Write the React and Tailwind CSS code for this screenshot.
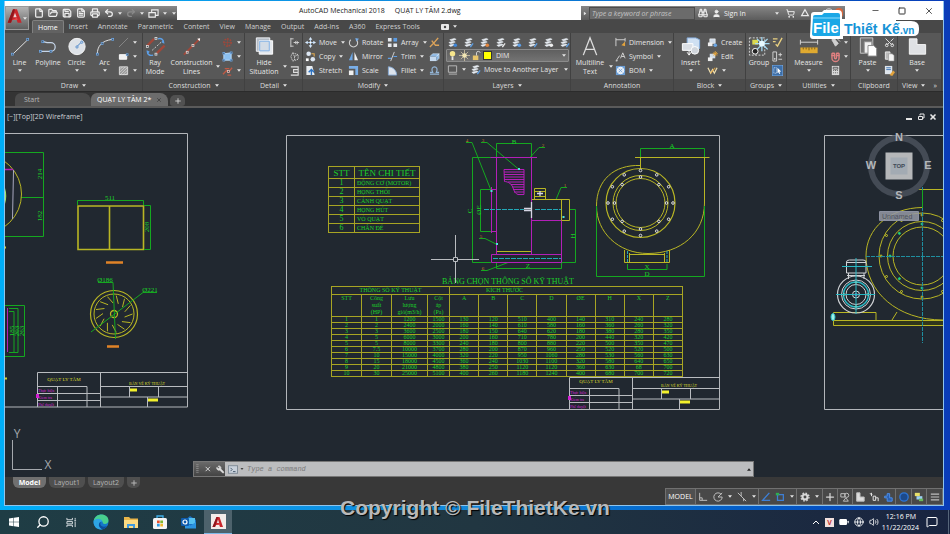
import clsx from "clsx"
import {
  BatteryMedium,
  Binoculars,
  File,
  FileText,
  FolderOpen,
  Globe,
  CircleHelp,
  Magnet,
  MessageSquare,
  Minus,
  Plus,
  Printer,
  Save,
  Scissors,
  Search,
  Settings,
  ShoppingCart,
  Square,
  Undo2,
  Redo2,
  User,
  Volume2,
  Wrench,
  X,
} from "lucide-react"

const menuTabs = ["Insert", "Annotate", "Parametric", "Content", "View", "Manage", "Output", "Add-ins", "A360", "Express Tools"]

const parts = ["ĐỘNG CƠ (MOTOR)", "HỌNG THỔI", "CÁNH QUẠT", "HỌNG HÚT", "VỎ QUẠT", "CHÂN ĐẾ"]

const specHeads = ["A", "B", "C", "D", "ØE", "H", "X", "Z"]

const specRows = [
  [1, 1, 1200, 1500, 130, 120, 510, 400, 140, 310, 240, 280],
  [2, 2, 2400, 2000, 160, 140, 610, 580, 160, 360, 260, 320],
  [3, 3, 3600, 2500, 180, 150, 640, 620, 180, 380, 280, 350],
  [4, 5, 6000, 3000, 200, 160, 710, 780, 200, 440, 320, 420],
  [5, 5, 8000, 3300, 240, 180, 800, 880, 220, 500, 350, 470],
  [6, "7.5", 10000, 3700, 280, 200, 870, 960, 250, 520, 520, 500],
  [7, 10, 15000, 4000, 320, 220, 950, 1060, 280, 530, 560, 630],
  [8, 15, 18000, 4500, 360, 240, 1030, 1100, 320, 580, 640, 650],
  [9, 20, 21000, 4800, 380, 250, 1120, 1120, 360, 630, 68, 700],
  [10, 30, 25000, 5100, 400, 260, 1180, 1240, 400, 680, 700, 720],
]

const Caret = ({ className }) => (
  <svg viewBox="0 0 6 4" className={clsx("h-[3px] w-[4px] shrink-0", className)}>
    <path d="M0 0h6L3 4z" fill="#e4e4e4" />
  </svg>
)

const Big = ({ children }) => (
  <svg viewBox="0 0 24 24" className="h-[23px] w-6 shrink-0" fill="none">
    {children}
  </svg>
)

const Small = ({ children }) => (
  <svg viewBox="0 0 12 12" className="h-[11px] w-[11px] shrink-0" fill="none">
    {children}
  </svg>
)

const Node = ({ x, y, c = "#6fa8e6" }) => <rect x={x - 1} y={y - 1} width="2" height="2" fill="#3a4653" stroke={c} strokeWidth="0.8" />

/* large ribbon icons */
const LineIcon = () => (
  <Big>
    <path d="M4.500 20L20 5" stroke="#e6e6e6" />
    <Node x={4} y={20} />
    <Node x={20} y={4.5} />
  </Big>
)
const PolylineIcon = () => (
  <Big>
    <path d="M4 17h11a4.500 4.500 0 0 0 0-9h-4L7 7" stroke="#c5d5e8" strokeWidth="1.300" />
    <Node x={4} y={17} />
    <Node x={15} y={17} />
    <Node x={6.5} y={7} />
  </Big>
)
const CircleIcon = () => (
  <Big>
    <circle cx="12" cy="12" r="8.500" fill="#dde2e8" stroke="#f4f4f4" />
    <path d="M12 12l4-4" stroke="#3f7fc8" />
    <circle cx="12" cy="12.500" r="1.200" fill="#dde2e8" stroke="#3f7fc8" strokeWidth="0.800" />
    <circle cx="17" cy="7.500" r="1.200" fill="#dde2e8" stroke="#3f7fc8" strokeWidth="0.800" />
  </Big>
)
const ArcIcon = () => (
  <Big>
    <path d="M4 20C4 12 8 6 20 4.500" stroke="#e6e6e6" />
    <Node x={4} y={20} />
    <Node x={9} y={9} />
    <Node x={20} y={4.5} />
  </Big>
)
const RayIcon = () => (
  <Big>
    <path d="M4 11l7-7M14 19l8-8" stroke="#a0483a" strokeWidth="2.500" />
    <path d="M9 16L19 7" stroke="#cfcfcf" strokeDasharray="2 1.500" />
    <path d="M15 4c4-1 6 1 6 4l-2-1M10 21c-4 1-6-1-6-4l2 1" stroke="#5d9fe6" strokeWidth="1.500" />
    <Node x={4} y={12} c="#e6e6e6" />
    <Node x={13} y={3.5} c="#e6e6e6" />
    <Node x={13} y={20} c="#e6e6e6" />
  </Big>
)
const ConstructionIcon = () => (
  <Big>
    <path d="M3.500 20.500L20 4" stroke="#a0483a" strokeWidth="2" />
    <Node x={7} y={18} c="#efd9d4" />
    <Node x={13} y={11} c="#efd9d4" />
    <path d="M20.500 3.500l-3 .5 2.500 2.500z" fill="#fff" />
  </Big>
)
const HideIcon = () => (
  <Big>
    <path d="M4 3h14v14H4z" fill="#b4bcc6" stroke="#f2f5f9" />
    <path d="M7 6h14v14H7z" fill="#e4e8ed" stroke="#fff" />
    <path d="M7.500 6.500h10v10h-10z" stroke="#7fb0e6" fill="#d3dce6" />
  </Big>
)
const MTextIcon = () => (
  <Big>
    <path d="M5 21L12 3l7 18M7.500 15h9" stroke="#dcdcdc" strokeWidth="1.400" />
  </Big>
)
const InsertIcon = () => (
  <Big>
    <path d="M8 3h9l4 2v9l-4 2H8z" fill="#cfe0f2" stroke="#86aede" />
    <path d="M3 9h11v7H3z" fill="#dadfe5" stroke="#fff" />
    <circle cx="16" cy="16" r="4" fill="#d0d5db" stroke="#fff" />
    <path d="M10 16v4M8 18l2 3 2-3" stroke="#fff" />
  </Big>
)
const GroupIcon = () => (
  <Big>
    <path d="M2 3h16v18H2z" stroke="#d8d8d8" strokeDasharray="2 1.500" />
    <path d="M5 5h6v5H5z" fill="#d9d94f" />
    <circle cx="8" cy="17" r="3" fill="#222" stroke="#fff" />
    <path d="M15 2v15M8 9h15M10 4l11 11M21 4L10 15" stroke="#a5dcf7" strokeWidth="1.300" />
    <circle cx="15" cy="9" r="3" fill="#e9faff" />
  </Big>
)
const MeasureIcon = () => (
  <Big>
    <path d="M3 5v5M21 5v5M3 7.500h18" stroke="#d8d8d8" />
    <path d="M3 13h18v6H3z" fill="#e0aa30" />
    <path d="M6 13v2M9 13v2M12 13v3M15 13v2M18 13v2" stroke="#5e4610" strokeWidth="0.800" />
  </Big>
)
const PasteIcon = () => (
  <Big>
    <path d="M4 3h13v16H4z" fill="#6e6e6e" stroke="#c8c8c8" />
    <path d="M8 7h8v12H8z" fill="#f1f1f1" stroke="#888" />
    <path d="M12 11h6l3 3v8h-9z" fill="#fff" stroke="#888" />
  </Big>
)
const BaseIcon = () => (
  <Big>
    <path d="M4 4h8v6h9v10H4z" fill="#dfe1e4" stroke="#f6f6f6" />
  </Big>
)

/* small ribbon icons, keyed by command */
const smallIcons = {
  ray: <path d="M1 11L11 1" stroke="#8b8b8b" />,
  rect: (
    <>
      <path d="M1.500 4h8v5h-8z" fill="#f0f0f0" stroke="#fff" />
      <Node x={10} y={4} />
    </>
  ),
  hatch: (
    <>
      <path d="M1.500 2h9v8.500h-9z" fill="#9a9a9a" stroke="#ddd" />
      <path d="M2 5l3-3M2 8l6-6M2 11l8-8M5 11l5-5M8 11l2-2" stroke="#eee" strokeWidth="0.600" />
    </>
  ),
  center: (
    <>
      <circle cx="6" cy="6" r="4" stroke="#a0483a" strokeWidth="1.500" strokeDasharray="2 1" />
      <path d="M6 1v10M1 6h10" stroke="#a0483a" strokeWidth="0.700" />
    </>
  ),
  area: (
    <>
      <path d="M2 3l8-1v8H2z" fill="#8cc0f0" stroke="#b9dbfa" />
      <Node x={2} y={2.5} />
      <Node x={10} y={2} />
      <Node x={2} y={10} />
      <Node x={10} y={10} />
    </>
  ),
  project: (
    <>
      <path d="M1 10l4-4 2 2 4-5M3 4h5M6 11h4" stroke="#c05a44" strokeWidth="1.500" />
      <Node x={7} y={7} c="#e8c8c0" />
    </>
  ),
  detail: <path d="M2 1v10M2 2h3M2 10h3M5 6h6M8 4.500L6 6l2 1.500M9 4.500V8" stroke="#d4d4d4" />,
  hidden: <path d="M4 2l6 2v5l-6 2-2-5zM4 2l2 4M6 6l4-2M6 6v4" stroke="#d4d4d4" strokeDasharray="1.500 0.800" />,
  section: <path d="M2 2h8v3H5v3h5v3H2M8 5h2v3" stroke="#dedede" strokeWidth="1.200" />,
  move: (
    <>
      <path d="M6 1v10M1 6h10" stroke="#a9cdf2" />
      <path d="M6 0l2 3H4zM6 12l2-3H4zM0 6l3-2v4zM12 6L9 4v4z" fill="#d7e9fb" />
      <path d="M5 5h2v2H5z" fill="#fff" />
    </>
  ),
  rotate: (
    <>
      <path d="M3 3a4.500 4.500 0 1 0 6 0" stroke="#d0d0d0" strokeWidth="1.200" />
      <path d="M8 1l4 1-3 3z" fill="#78aee8" />
    </>
  ),
  array: (
    <>
      <path d="M1 1h4v4H1zM1 7h4v4H1zM7 7h4v4H7z" fill="#e6e9ed" />
      <path d="M7 1h4v4H7z" fill="#5b9be2" />
    </>
  ),
  erase: <path d="M1 11c3-3 6-6 9-10M3 4l4 5h4" stroke="#dca35a" strokeWidth="1.500" />,
  copy: (
    <>
      <circle cx="4" cy="3" r="2.500" fill="#dce6f2" />
      <circle cx="8.500" cy="9" r="2.500" fill="#dce6f2" />
      <path d="M1 8h3v3H1z" fill="#fff" />
      <path d="M7 3h3v3" stroke="#e0aa50" strokeWidth="1.200" />
    </>
  ),
  mirror: (
    <>
      <path d="M5 1v9H1z" fill="#6aa5e4" />
      <path d="M7 1v9h4z" fill="#f0f0f0" />
    </>
  ),
  trim: (
    <>
      <path d="M1 8l4 0M7 6h4" stroke="#5f9fe6" strokeWidth="1.300" />
      <path d="M4 11L8 1" stroke="#d8d8d8" />
    </>
  ),
  explode: (
    <>
      <path d="M1 6h7v5H1z" fill="#c5d9ee" />
      <path d="M1 6l3-3h7L8 6M8 6l3-3v5l-3 3" fill="#8db8e4" stroke="#dceafa" strokeWidth="0.600" />
    </>
  ),
  stretch: (
    <>
      <path d="M1.500 1H8l2.500 10h-9z" fill="#e8ecf0" />
      <path d="M4 8l3-3 3 3M7 5v6" stroke="#2c72c2" strokeWidth="1.500" />
    </>
  ),
  scale: (
    <>
      <path d="M1 1h10v10H8V4H1z" fill="#79aee8" />
      <path d="M1 6h5v5H1z" fill="#f0f0f0" />
    </>
  ),
  fillet: <path d="M1.500 11V2c5 0 9 4 9 9z" fill="#dce3ec" stroke="#84a8d4" />,
  offset: <path d="M1 10h10M1 8h3C0 0 12 0 8 8h3" stroke="#94b6d8" strokeWidth="1.300" />,
  symbol: <path d="M1 11l4-6M1 11l2-.5M6 8l2.500-6L11 8M7 6h3" stroke="#d6d6d6" />,
  dimension: (
    <>
      <path d="M1 1v9M11 1v4M1 3h10" stroke="#d6d6d6" />
      <path d="M7 9l4-4v5z" fill="#e2a33d" />
    </>
  ),
  bom: (
    <>
      <path d="M1 1h10v10H1z" fill="#6d9fd6" />
      <circle cx="6" cy="6" r="3.500" fill="#dfeaf6" stroke="#fff" />
      <path d="M4 4l4 4M8 4L4 8" stroke="#6d9fd6" strokeWidth="0.800" />
    </>
  ),
  create: (
    <>
      <path d="M3 2h6v5H3z" fill="#cfdbe8" stroke="#fff" strokeWidth="0.600" />
      <path d="M1 6h5v4H1z" fill="#eee" />
      <circle cx="9" cy="9" r="2" fill="#6aa5e4" />
    </>
  ),
  edit: (
    <>
      <path d="M3 3h6v5H3z" fill="#cfdbe8" />
      <path d="M1 7h5v4H1z" fill="#eee" />
      <path d="M9 0v6M6 3h6M7 1l4 4M11 1L7 5" stroke="#e8a63a" strokeWidth="0.900" />
    </>
  ),
  attrs: (
    <>
      <path d="M1 3l3 6 2-4 2 4 3-6" stroke="#f0e0b0" strokeWidth="1.300" />
      <path d="M4 9l5-6" stroke="#e2a33d" strokeWidth="1.200" />
    </>
  ),
  ungroup: <path d="M1 2h5M1 5h3M4 8l2 2 5-9" stroke="#e8cf80" strokeWidth="1.500" />,
  groupedit: (
    <>
      <path d="M1 1h4v10H1zM7 4h4M9 2v4M7 9h4" stroke="#d8d8d8" />
      <circle cx="3" cy="8.500" r="1" fill="#d8d8d8" />
    </>
  ),
  groupsel: (
    <>
      <path d="M0 0h12v12H0z" fill="#3c6ea8" stroke="#7fb0e8" />
      <path d="M2 3h3v6H2z" stroke="#dce8f6" strokeDasharray="1 1" />
      <path d="M6 3l4 4-2 .3 1 2-1 .5-1-2L6 9z" fill="#fff" />
    </>
  ),
  select: <path d="M2 3l3-1 4 5-3 3zM8 2l3 3" fill="#d0d0d0" stroke="#d0d0d0" />,
  calc: (
    <>
      <path d="M2 1h8v10H2z" fill="#d8d8d8" />
      <path d="M3.500 2.500h5v2h-5zM3.500 6h1M5.500 6h1M7.500 6h1M3.500 8.500h1M5.500 8.500h1M7.500 8.500h1" stroke="#555" />
    </>
  ),
  copyclip: (
    <>
      <path d="M1.500 1h5v8h-5z" fill="#bbb" stroke="#eee" />
      <path d="M5 3h4l2 2v6H5z" fill="#f4f4f4" stroke="#888" strokeWidth="0.600" />
    </>
  ),
  workspace: <path d="M1 5h7v5H1zM4 5V2h7v6H8" fill="#6b6b6b" stroke="#eee" strokeWidth="1.200" />,
  match: (
    <>
      <path d="M1 1h8v9H1z" fill="#dfe5ec" />
      <path d="M2.500 3h5M2.500 5h5" stroke="#3b72b4" />
      <path d="M6 11l4-5 2 2-3 4z" fill="#e2a33d" />
    </>
  ),
  frame: <path d="M1.500 2h9v7h-9zM2 11h9" stroke="#bdbdbd" />,
}

const SmallIcon = ({ name }) => <Small>{smallIcons[name]}</Small>

const LayerIcon = ({ tone = "#5d9fe6", mark }) => (
  <Small>
    <path d="M3 3l5-1.500 2 1L5 4.300zM2 6l5-1.500 2 1L4 7.300zM2 9l5-1.500 2 1-5 1.800z" fill="#e8edf3" stroke="#e8edf3" strokeWidth="0.600" />
    {mark === "dot" ? <circle cx="9" cy="9" r="2" fill={tone} /> : <path d="M8 11l3-4" stroke={tone} strokeWidth="1.500" />}
  </Small>
)

const Panel = ({ title, width, caret = true, more, children }) => (
  <section className={clsx("flex shrink-0 flex-col border-r border-[#414141]", width)}>
    <div className="flex h-[46px] items-start bg-[#585858] pt-[2px]">{children}</div>
    <h2 className="flex h-3 items-center justify-center gap-1 bg-[#4a4a4a] text-[#dcdcdc]">
      {title}
      {caret && <Caret />}
      {more && <span className="ml-1">»</span>}
    </h2>
  </section>
)

const BigButton = ({ icon, label, width, caret = true }) => (
  <button type="button" className={clsx("flex shrink-0 flex-col items-center leading-[9px]", width)}>
    {icon}
    {label.map((line) => (
      <span key={line} className="whitespace-nowrap">
        {line}
      </span>
    ))}
    {caret && label.length === 1 && <Caret className="mt-[2px]" />}
  </button>
)

const SideCaret = () => (
  <span className="flex h-[42px] w-[6px] shrink-0 items-end pb-[9px]">
    <Caret />
  </span>
)

const Column = ({ width, items }) => (
  <div className={clsx("flex shrink-0 flex-col", width)}>
    {items.map(([icon, label, caret]) => (
      <button key={icon} type="button" aria-label={label || icon} className="flex h-[14px] items-center gap-[3px] whitespace-nowrap">
        <SmallIcon name={icon} />
        {label}
        {caret && <Caret className="ml-[1px]" />}
      </button>
    ))}
  </div>
)

const AcadLogo = ({ className }) => (
  <svg viewBox="0 0 24 24" className={className}>
    <path d="M9 2h6l7 20h-6l-1.500-4H8l-2 4H1z" fill="#c9262c" />
    <path d="M9 2h3L6 22H1z" fill="#8f171d" />
    <path d="M12 7l2.500 7H9.500z" fill="#e9d6d6" />
    <path d="M8 18l7-3.500 1 3.500z" fill="#e5474b" />
  </svg>
)

const TitleBar = () => (
  <header className="flex h-[19px] items-stretch bg-white">
    <div className="mt-[5px] ml-6 flex w-[148px] items-center gap-[4px] bg-linear-to-b from-[#8a8a8a] to-[#4e4e4e] pl-[5px] text-[#ededed]">
      {[File, FolderOpen, Save, FileText, Printer].map((Icon, i) => (
        <button key={i} type="button" aria-label={["New", "Open", "Save", "Save As", "Plot"][i]}>
          <Icon size={10} strokeWidth={3} />
        </button>
      ))}
      <button type="button" aria-label="Undo" className="flex items-center gap-[4px]">
        <Undo2 size={10} strokeWidth={3} />
        <Caret />
      </button>
      <button type="button" aria-label="Redo" className="flex items-center gap-[4px] text-[#8b8b8b]">
        <Redo2 size={10} strokeWidth={3} />
        <Caret />
      </button>
      <button type="button" aria-label="Workspace" className="flex items-center gap-[4px]">
        <SmallIcon name="workspace" />
        <Caret />
      </button>
      <Caret className="ml-px" />
    </div>
    <h1 className="flex flex-1 items-center gap-[10px] pl-[122px] text-[7px] whitespace-pre text-[#222]">
      <span>AutoCAD Mechanical 2018</span>
      <span>QUẠT LY TÂM 2.dwg</span>
    </h1>
    <div className="mt-[5px] flex w-[264px] items-center bg-linear-to-b from-[#868686] to-[#5c5c5c] text-[#efefef]">
      <span className="flex w-[8px] justify-center">
        <Caret className="-rotate-90" />
      </span>
      <input
        type="text"
        aria-label="Search"
        placeholder="Type a keyword or phrase"
        className="h-[13px] w-[106px] border border-[#4c4c4c] bg-[#6b6b6b] px-[2px] italic outline-none placeholder:text-[#c4c4c4]"
      />
      <button type="button" aria-label="Find" className="ml-[3px]">
        <Binoculars size={10} strokeWidth={2.5} />
      </button>
      <button type="button" className="ml-[4px] flex items-center gap-[3px]">
        <User size={9} fill="currentColor" />
        Sign In
      </button>
      <Caret className="ml-[29px]" />
      <button type="button" aria-label="Store" className="ml-[7px]">
        <ShoppingCart size={9} strokeWidth={2.5} />
      </button>
      <button type="button" aria-label="A360" className="ml-[5px]">
        <svg viewBox="0 0 12 12" className="h-[10px] w-[10px]" fill="none">
          <path d="M6 2L2 9h8z" stroke="#e8e8e8" strokeWidth="1.500" />
        </svg>
      </button>
      <button type="button" aria-label="Help" className="ml-[14px]">
        <CircleHelp size={10} />
      </button>
      <span className="ml-px h-[10px] w-[8px] rounded-full bg-[#d9663c]" />
    </div>
    <div className="flex w-[98px] items-center justify-end gap-[18px] pr-[9px] text-[#333]">
      <button type="button" aria-label="Minimize">
        <Minus size={9} strokeWidth={2} />
      </button>
      <button type="button" aria-label="Maximize">
        <Square size={8} strokeWidth={3} />
      </button>
      <button type="button" aria-label="Close">
        <X size={10} strokeWidth={2} />
      </button>
    </div>
  </header>
)

const MenuTabs = () => (
  <nav className="flex h-[13px] items-center bg-[#484848] pl-[27px] text-[#cfcfcf]">
    <a href="#home" className="flex h-full items-center rounded-t-[2px] border border-b-0 border-[#808080] bg-[#626262] px-[5px] text-white">
      Home
    </a>
    {menuTabs.map((tab) => (
      <a key={tab} href={"#" + tab} className="px-[5px] whitespace-nowrap">
        {tab}
      </a>
    ))}
    <button type="button" aria-label="Ribbon display" className="ml-4 flex items-center gap-1">
      <svg viewBox="0 0 8 6" className="h-[6px] w-[8px]">
        <rect width="8" height="6" rx="1" fill="#e8e8e8" />
        <circle cx="4" cy="3" r="1.200" fill="#444" />
      </svg>
      <Caret />
    </button>
  </nav>
)

const LayersPanel = () => (
  <Panel title="Layers" width="w-[127px]">
    <div className="flex w-full flex-col pl-[2px]">
      <div className="flex h-[14px] items-center gap-[5px] pl-[1px]">
        {["#3f86d8", "#5d9fe6", "#e2853d", "#e8e8e8", "#5d9fe6", "#5d9fe6", "#f0f0f0", "#5d9fe6"].map((tone, i) => (
          <button key={i} type="button" aria-label={"Layer tool " + (i + 1)}>
            <LayerIcon tone={tone} mark={i % 2 ? "line" : "dot"} />
          </button>
        ))}
      </div>
      <button
        type="button"
        aria-label="Current layer"
        className="flex h-[13px] w-[123px] items-center gap-[1px] rounded-[1px] border border-[#8b8b8b] bg-linear-to-b from-[#5f5f5f] to-[#737373]"
      >
        <Small>
          <circle cx="6" cy="4" r="3" fill="#f6e58c" />
          <path d="M5 7h2v4H5z" fill="#e6e6e6" />
        </Small>
        <Small>
          <path d="M6 0v12M0 6h12M2 2l8 8M10 2l-8 8" stroke="#d8cba8" strokeWidth="0.800" />
          <circle cx="6" cy="6" r="2.500" fill="#f2e6b4" />
        </Small>
        <Small>
          <path d="M2 6h6v5H2z" fill="#e8c46a" />
          <path d="M6 6V3c0-2 4-2 4 0" stroke="#ddd" />
        </Small>
        <span className="mr-[3px] h-[9px] w-[9px] border border-[#333] bg-[#ffff00]" />
        DIM
        <Caret className="mr-[2px] ml-auto" />
      </button>
      <div className="flex h-[15px] items-center gap-[4px] pl-[1px]">
        <SmallIcon name="frame" />
        <Caret />
        <button type="button" className="flex items-center gap-[3px] whitespace-nowrap">
          <LayerIcon />
          Move to Another Layer
          <Caret className="ml-[3px]" />
        </button>
      </div>
    </div>
  </Panel>
)

const IconColumn = ({ children }) => <div className="flex flex-col">{children}</div>

const Ribbon = () => (
  <div className="flex overflow-hidden border-b border-[#2b2b2b] bg-[#4b4b4b] text-[#e6e6e6]">
    <Panel title="Draw" width="w-[138px]">
      <BigButton icon={<LineIcon />} label={["Line"]} width="w-[29px]" />
      <BigButton icon={<PolylineIcon />} label={["Polyline"]} width="w-[28px]" caret={false} />
      <BigButton icon={<CircleIcon />} label={["Circle"]} width="w-[29px]" />
      <BigButton icon={<ArcIcon />} label={["Arc"]} width="w-[27px]" />
      <Column width="w-[22px]" items={[["ray", "", true], ["rect", "", true], ["hatch", "", true]]} />
    </Panel>
    <Panel title="Construction" width="w-[102px]">
      <BigButton icon={<RayIcon />} label={["Ray", "Mode"]} width="w-[24px]" />
      <BigButton icon={<ConstructionIcon />} label={["Construction", "Lines"]} width="w-[49px]" />
      <SideCaret />
      <Column width="w-[20px]" items={[["center", "", true], ["area", "", true], ["project", "", true]]} />
    </Panel>
    <Panel title="Detail" width="w-[58px]">
      <BigButton icon={<HideIcon />} label={["Hide", "Situation"]} width="w-[38px]" />
      <SideCaret />
      <Column width="w-[12px]" items={[["detail"], ["hidden"], ["section"]]} />
    </Panel>
    <Panel title="Modify" width="w-[141px]">
      <div className="flex pl-[2px]">
        <Column width="w-[43px]" items={[["move", "Move", true], ["copy", "Copy", true], ["stretch", "Stretch"]]} />
        <Column width="w-[39px]" items={[["rotate", "Rotate"], ["mirror", "Mirror"], ["scale", "Scale"]]} />
        <Column width="w-[42px]" items={[["array", "Array", true], ["trim", "Trim", true], ["fillet", "Fillet", true]]} />
        <Column width="w-[12px]" items={[["erase"], ["explode"], ["offset"]]} />
      </div>
    </Panel>
    <LayersPanel />
    <Panel title="Annotation" width="w-[103px]" caret={false}>
      <BigButton icon={<MTextIcon />} label={["Multiline", "Text"]} width="w-[38px]" />
      <SideCaret />
      <Column width="w-[58px]" items={[["dimension", "Dimension", true], ["symbol", "Symbol", true], ["bom", "BOM", true]]} />
    </Panel>
    <Panel title="Block" width="w-[72px]">
      <BigButton icon={<InsertIcon />} label={["Insert"]} width="w-[33px]" />
      <Column width="w-[38px]" items={[["create", "Create"], ["edit", "Edit"], ["attrs", "", true]]} />
    </Panel>
    <Panel title="Groups" width="w-[41px]">
      <BigButton icon={<GroupIcon />} label={["Group"]} width="w-[26px]" caret={false} />
      <Column width="w-[14px]" items={[["ungroup"], ["groupedit"], ["groupsel"]]} />
    </Panel>
    <Panel title="Utilities" width="w-[64px]">
      <BigButton icon={<MeasureIcon />} label={["Measure"]} width="w-[43px]" />
      <IconColumn>
        <button type="button" aria-label="Select" className="flex h-[14px] items-center gap-[3px]">
          <SmallIcon name="select" />
          <Caret />
        </button>
        <button type="button" aria-label="Snap" className="flex h-[14px] items-center gap-[3px] text-[#e08080]">
          <Magnet size={11} strokeWidth={3} className="rotate-135" />
          <Caret />
        </button>
        <button type="button" aria-label="Calculator" className="flex h-[14px] items-center">
          <SmallIcon name="calc" />
        </button>
      </IconColumn>
    </Panel>
    <Panel title="Clipboard" width="w-[47px]" caret={false}>
      <BigButton icon={<PasteIcon />} label={["Paste"]} width="w-[33px]" />
      <IconColumn>
        <button type="button" aria-label="Cut" className="flex h-[14px] items-center">
          <Scissors size={11} className="-rotate-90" />
        </button>
        <button type="button" aria-label="Copy clip" className="flex h-[14px] items-center">
          <SmallIcon name="copyclip" />
        </button>
        <button type="button" aria-label="Match" className="flex h-[14px] items-center">
          <SmallIcon name="match" />
        </button>
      </IconColumn>
    </Panel>
    <Panel title="View" width="w-[44px]" more>
      <BigButton icon={<BaseIcon />} label={["Base"]} width="w-[38px]" />
    </Panel>
  </div>
)

const FileTabs = () => (
  <div className="flex h-4 items-end border-b-2 border-[#5a5a5a] bg-[#343434] pl-[10px]">
    <button type="button" className="flex h-[13px] w-[76px] items-center rounded-tl-[6px] rounded-tr-[8px] bg-[#4c4c4c] pl-[9px] text-[#b9b9b9]">
      Start
    </button>
    <button type="button" className="flex h-[13px] w-[77px] items-center gap-[5px] rounded-tl-[6px] rounded-tr-[8px] bg-[#6c6c6c] pl-[6px] whitespace-nowrap text-white">
      QUẠT LY TÂM 2*
      <X size={6} className="text-[#3b3b3b]" strokeWidth={3} />
    </button>
    <button type="button" aria-label="New drawing" className="ml-[2px] flex h-[11px] w-[15px] items-center justify-center rounded-t-[5px] rounded-b-[3px] bg-[#515151] text-[#ddd]">
      <Plus size={8} strokeWidth={2.5} />
    </button>
  </div>
)

const CadText = ({ x, y, size = 7, color = "#1bd028", rotate, children, anchor = "middle" }) => (
  <text x={x} y={y} fontSize={size} fill={color} textAnchor={anchor} transform={rotate ? `rotate(-90 ${x} ${y})` : undefined}>
    {children}
  </text>
)

const polar = (cx, cy, r, deg) => {
  const a = (deg * Math.PI) / 180
  return [cx + r * Math.cos(a), cy + r * Math.sin(a)]
}

const Bolts = ({ cx, cy, r, count, color, size = 1.3, fill = "none" }) =>
  Array.from({ length: count }, (_, i) => {
    const [x, y] = polar(cx, cy, r, (360 / count) * i)
    return <circle key={i} cx={x} cy={y} r={size} stroke={color} fill={fill} />
  })

const TitleBlock = ({ dx, dy, top }) => (
  <g transform={`translate(${dx} ${dy})`}>
    <path
      d={`M37.500 407V${top}H187.500M100.500 ${top}V407M37.500 386.500H87V407M37.500 393.500H100.500M37.500 400.500H100.500M57.500 386.500V407M100.500 386.500H187.500M100.500 397H187.500M129.500 386.500V397M158.500 386.500V397M147.500 397V407`}
      stroke="#b9bcc0"
    />
    <path d="M130 388.500h7v3h-7zM148 398.500h10v3h-10z" fill="#f2f02c" />
    <path d="M36 394h3v4h-3z" fill="#d11fd1" />
    <CadText x={64} y={381} size={5} color="#dcdc2e">QUẠT LY TÂM</CadText>
    <CadText x={147} y={385} size={4} color="#dcdc2e">BẢN VẼ KỸ THUẬT</CadText>
    <CadText x={38} y={392} size={4} color="#d626d6" anchor="start">Thực hiện</CadText>
    <CadText x={38} y={399} size={4} color="#d626d6" anchor="start">Kiểm tra</CadText>
    <CadText x={38} y={406} size={4} color="#d626d6" anchor="start">Phê duyệt</CadText>
  </g>
)

const blades = Array.from({ length: 13 }, (_, i) => {
  const [x1, y1] = polar(114, 314, 11, i * 27.7 + 16)
  const [x2, y2] = polar(114, 314, 18.5, i * 27.7)
  return `M${x1} ${y1}L${x2} ${y2}`
}).join("")

const GREEN = "#15a820"
const YELLOW = "#b9b624"
const MAGENTA = "#b31fb8"
const CYAN = "#22a9b8"

const Drawing = () => (
  <svg
    viewBox="5 108 938 369"
    width="938"
    height="369"
    fill="none"
    className="absolute top-0 left-0 [font-family:'Liberation_Serif',serif]"
    role="img"
    aria-label="Centrifugal fan drawing"
  >
    {/* sheet borders */}
    <path d="M5 133.500H187.500V407H5M286.500 135.500H719.500V409.500H286.500zM943 135.500H824.500V409.500H943" stroke="#b3b6ba" />

    {/* left sheet */}
    <path d="M5 152.500H43.500V236.500H5M21 197.500H43" stroke={GREEN} />
    <circle cx="-18.500" cy="194" r="40" stroke={YELLOW} />
    <circle cx="-18.500" cy="196" r="24" stroke="#9fe06a" strokeWidth="1.500" />
    <path d="M5 169.500h8" stroke={MAGENTA} strokeWidth="1.500" />
    <path d="M13.500 170L12.500 219" stroke="#a9a9c0" />
    <CadText x={42} y={174} rotate>214</CadText>
    <CadText x={42} y={216} rotate>182</CadText>
    <path d="M78 206h65.500v43.500H78zM109.500 206v43" stroke={YELLOW} strokeWidth="1.600" />
    <path d="M77.500 205V200.500H143.500V205M144 205.500h6.500V249.500H144" stroke={GREEN} />
    <CadText x={110} y={200}>511</CadText>
    <CadText x={149} y={227} rotate>208</CadText>
    <path d="M106 262.500h17M107 346.500h12" stroke="#e08327" strokeWidth="2.500" />
    <circle cx="114" cy="314" r="23.500" stroke={YELLOW} strokeWidth="1.200" />
    <circle cx="114" cy="314" r="20" stroke={YELLOW} />
    <circle cx="114" cy="314" r="3.500" stroke={YELLOW} strokeWidth="1.300" />
    <path d={blades} stroke={YELLOW} />
    <path d="M98 282.500h15L115.500 339M157 292.500h-14L91 332" stroke={GREEN} />
    <CadText x={105} y={282}>Ø186</CadText>
    <CadText x={150} y={292}>Ø221</CadText>
    <path d="M5 305.500H24.500V356.500H5M9 308.500h9v44h-9M9 311.500h5v41" stroke={GREEN} />
    <path d="M7.500 308v44" stroke={MAGENTA} />
    <CadText x={14} y={331} rotate>185</CadText>
    <CadText x={19} y={331} rotate>203</CadText>
    <CadText x={24} y={331} rotate>263</CadText>
    <path d="M5 247.500h1M5 378.500h2" stroke="#d5d52a" strokeWidth="2" />
    <TitleBlock dx={0} dy={0} top={372.5} />
    <TitleBlock dx={532} dy={2} top={375.5} />

    {/* side view */}
    <path
      d="M496.500 157V143.500H531.500V157M496 157.500H472.500V262.500H491M491 189.500H480.500V231.500H491M496.500 262V268.500H561.500V262M569 209.500h6.500V262.500H561M466 142.500h6l19.500 49M481 142.500h6l32 27M545 147.500h-6l-9 10M567 187.500h-6l-5 12M479 238.500h6l12 6M481 270.500h6l21-8"
      stroke={GREEN}
    />
    <path
      d="M490.500 157.500H537M496.500 157.500V254M531.500 157.500V254M496 189.500H491.500M491.500 187V233M496 231.500H491.500M532 220.500H561.500V262M561.500 199V220M491.500 254.500H561.500V262.500H491.500z"
      stroke={MAGENTA}
    />
    <path
      d="M504 169.500H524V194.500H518C513 193 514 186 510 183.500C508 182 506 181.500 504.500 181.500zM504 172h20M504 174.500h20M504 177h20M504 179.500h20M508 182h16M511 184.500h13M512 187h12M513 189.500h11M514 192h10"
      stroke={MAGENTA}
    />
    <path d="M497 251.500h34M532 199.500H569.500V220.500H561.500V199.500M534.500 199V188.500H545.500V199M534.500 191.500H545.500M534 196.500h12" stroke={YELLOW} />
    <path d="M484 209.500h40M535 209.500h26M493 258.500h68" stroke={CYAN} strokeDasharray="5 1" />
    <path d="M524 208.500h8M524 210.500h8M531.500 202v16M537 193.500h6M540 191v5" stroke="#d5d5e4" strokeWidth="1.300" />
    <path d="M562.500 216h2v2h-2zM496 243h2v2h-2zM518 168h2v2h-2zM490.500 190h2v2h-2z" fill="#52e0e0" />
    <CadText x={514} y={144}>B</CadText>
    <CadText x={472} y={211} rotate>C</CadText>
    <CadText x={481} y={210} rotate>ØE</CadText>
    <CadText x={575} y={236} rotate>H</CadText>
    <CadText x={528} y={268}>Z</CadText>
    {[[4, 467, 142], [3, 483, 142], [2, 543, 147], [1, 565, 187], [5, 481, 238], [6, 483, 270]].map(([n, x, y]) => (
      <CadText key={n} x={x} y={y} size={5} color="#c97a2b">{n}</CadText>
    ))}

    {/* front view */}
    <path
      d="M635 157.500H709.500M640.500 157.500V169M640.500 165.500C614 164.500 596.500 180 596.500 206C596.500 232 618 253.500 648 253.500C681 253.500 704.500 233 704.500 203V157.500M624.500 250V262.500H669.500V250M629.500 253V262M664.500 253V262M629.500 254.500H664.500"
      stroke={YELLOW}
    />
    <circle cx="640.500" cy="203" r="34.500" stroke={YELLOW} strokeWidth="1.200" />
    <circle cx="640.500" cy="203" r="27.500" stroke={YELLOW} />
    <circle cx="640.500" cy="203" r="24.500" stroke={YELLOW} />
    <Bolts cx={640.5} cy={203} r={32.5} count={12} color="#e2e2e2" />
    <Bolts cx={640.5} cy={203} r={26} count={8} color="#e2e2e2" />
    <path d="M640.500 157V148.500H704.500V157M596.500 206V276.500H704.500V206M627.500 264V269.500H667V264" stroke={GREEN} />
    <path d="M627.500 251v12M667 251v12" stroke={CYAN} strokeDasharray="3 1" />
    <CadText x={672} y={148}>A</CadText>
    <CadText x={647} y={269}>X</CadText>
    <CadText x={647} y={276}>D</CadText>
    <CadText x={508} y={284} size={8}>BẢNG CHỌN THÔNG SỐ KỸ THUẬT</CadText>

    {/* right sheet */}
    <path
      d="M914 189.500H943M922 207.500C890 208 866 228 866 256C866 292 897 320 943 320M833.500 320.500V312.500H876V320.500M897 312l-5 8"
      stroke={YELLOW}
    />
    <path d="M833.500 320.500H950V325.500H833.500z" stroke={YELLOW} fill="#30361c" />
    {[43, 34.5, 29].map((r) => (
      <circle key={r} cx="922" cy="256" r={r} stroke={YELLOW} />
    ))}
    <Bolts cx={922} cy={256} r={41} count={12} color="#c9c92a" size={1} />
    <Bolts cx={922} cy={256} r={32} count={8} color="#1fd47e" size={1} fill="#1fd47e" />
    <path d="M866 256.500H943M922.500 182V343" stroke="#1f8fa0" strokeDasharray="4 1" />
    <path d="M922.500 190v18" stroke={GREEN} />
    <path d="M846.500 262q0-2 3-2h13.500q3 0 3 2v11h-19.500zM847 262.500h19M848.500 273v6M864 273v6M847 275.500h18" stroke="#d0d3d6" />
    <circle cx="856" cy="294.500" r="18.500" stroke="#d0d3d6" strokeWidth="1.200" />
    <circle cx="856" cy="294.500" r="14.500" stroke="#d0d3d6" />
    <circle cx="856" cy="294.500" r="12.500" stroke="#28b9c4" strokeWidth="1.400" />
    <circle cx="856" cy="294.500" r="10" stroke="#d0d3d6" />
    <circle cx="856" cy="294.500" r="3.500" stroke="#d0d3d6" />
    <circle cx="856" cy="294.500" r="1.500" fill="#9b8ad0" />
    <Bolts cx={856} cy={294.5} r={12} count={4} color="#bff0c8" size={0.8} />
    <path d="M842 266.500h30M836 294.500h39M856 258v56" stroke="#28b9c4" />
    <ellipse cx="833" cy="317" rx="2" ry="3.500" fill="#9ff0e8" stroke="#28b9c4" />

    {/* ucs marker */}
    <path d="M12.500 440V469.500H42" stroke="#a5a9ae" />
    <g className="[font-family:'Open_Sans',sans-serif]">
      <CadText x={17} y={438} size={12} color="#a5a9ae">Y</CadText>
      <CadText x={48} y={469} size={12} color="#a5a9ae">X</CadText>
    </g>

    {/* crosshair */}
    <path d="M431 259.500h22M457 259.500h22M455.500 235v22M455.500 261v22M453.500 257.500h4v4h-4z" stroke="#b9bcc0" />
  </svg>
)

const PartsTable = () => (
  <table className="absolute top-[58px] left-[323px] h-[66px] w-[92px] table-fixed border-collapse border border-[#a8a523] text-left text-[6px] leading-[8px] text-[#1bd028] [font-family:'Liberation_Serif',serif] [&_td]:border [&_td]:border-[#a8a523] [&_td]:p-0 [&_th]:border [&_th]:border-[#a8a523] [&_th]:p-0 [&_th]:font-normal">
    <thead>
      <tr className="h-[12px] text-center text-[9px]">
        <th className="w-[26px]">STT</th>
        <th className="whitespace-nowrap">TÊN CHI TIẾT</th>
      </tr>
    </thead>
    <tbody>
      {parts.map((part, i) => (
        <tr key={part} className="h-[9px]">
          <td className="text-center text-[8px]">{i + 1}</td>
          <td>
            <span className="pl-[2px] whitespace-nowrap">{part}</span>
          </td>
        </tr>
      ))}
    </tbody>
  </table>
)

const SpecTable = () => (
  <table className="absolute top-[178px] left-[326px] w-[352px] table-fixed border-collapse border border-[#a8a523] text-center text-[6px] leading-[5px] text-[#1bd028] [font-family:'Liberation_Serif',serif] [&_td]:border [&_td]:border-[#a8a523] [&_td]:p-0 [&_th]:border [&_th]:border-[#a8a523] [&_th]:p-0 [&_th]:font-normal">
    <colgroup>
      <col className="w-[30px]" />
      <col className="w-[30px]" />
      <col className="w-[36px]" />
      <col className="w-[22px]" />
      {specHeads.map((head) => (
        <col key={head} />
      ))}
    </colgroup>
    <thead>
      <tr className="h-[8px]">
        <th colSpan={4} className="text-[6px]">THÔNG SỐ KỸ THUẬT</th>
        <th colSpan={8} className="text-left text-[6px]">
          <span className="pl-9">KÍCH THƯỚC</span>
        </th>
      </tr>
      <tr className="h-[22px] align-top leading-[7px]">
        <th>STT</th>
        <th>
          Công
          <br />
          suất
          <br />
          (HP)
        </th>
        <th className="whitespace-nowrap">
          Lưu
          <br />
          lượng
          <br />
          gió(m3/h)
        </th>
        <th>
          Cột
          <br />
          áp
          <br />
          (Pa)
        </th>
        {specHeads.map((head) => (
          <th key={head}>{head}</th>
        ))}
      </tr>
    </thead>
    <tbody>
      {specRows.map((row) => (
        <tr key={row[0]} className="h-[6px]">
          {row.map((value, i) => (
            <td key={i}>{value}</td>
          ))}
        </tr>
      ))}
    </tbody>
  </table>
)

const ViewCube = () => (
  <div className="absolute top-[22px] right-[10px] flex w-[68px] flex-col items-center [font-family:'Liberation_Sans',sans-serif]">
    <svg viewBox="0 0 68 72" className="h-[72px] w-[68px]" fontSize="11" fontWeight="700" textAnchor="middle">
      <circle cx="34" cy="36" r="28" fill="none" stroke="#444b55" strokeWidth="6" />
      <rect x="20.500" y="22.500" width="27" height="27" fill="#b5b7b9" />
      <rect x="25.500" y="27.500" width="17" height="17" fill="#a3abb3" />
      <g fill="#b4b7ba">
        <text x="34" y="11">N</text>
        <text x="6" y="39">W</text>
        <text x="63" y="39">E</text>
        <text x="34" y="69">S</text>
      </g>
      <text x="34" y="38" fontSize="6" fill="#3f4a56">TOP</text>
    </svg>
    <button type="button" className="mt-[9px] flex h-[10px] w-10 items-center rounded-[1px] border border-[#8f94a5]/80 bg-[#9599a4]/85 pl-[2px] text-[7px] text-[#4c525e]">
      Unnamed
    </button>
  </div>
)

const CommandLine = () => (
  <div className="absolute right-[189px] bottom-0 left-[188px] flex h-4 border border-[#777]">
    <div className="flex w-[31px] items-center gap-[5px] bg-linear-to-b from-[#6a6a6a] to-[#444] pl-[2px] text-[#ddd]">
      <svg viewBox="0 0 3 10" className="h-[10px] w-[3px]">
        <path d="M0 0v10M2 0v10" stroke="#aaa" strokeDasharray="1 1" />
      </svg>
      <X size={8} strokeWidth={3} />
      <Wrench size={9} fill="currentColor" className="-scale-x-100" />
    </div>
    <div className="flex flex-1 items-center bg-[#bcbdbf] pr-[2px] pl-[3px]">
      <svg viewBox="0 0 12 10" className="h-[9px] w-[10px]" fill="none">
        <rect x="0.500" y="0.500" width="11" height="9" fill="#c8d0da" stroke="#77838f" />
        <path d="M3 3l2 2-2 2M6 7.500h3" stroke="#33475c" />
      </svg>
      <svg viewBox="0 0 6 4" className="ml-[2px] h-[2px] w-[4px]">
        <path d="M0 0h6L3 4z" fill="#444" />
      </svg>
      <input
        type="text"
        aria-label="Command"
        placeholder="Type a command"
        className="ml-[3px] flex-1 text-[7px] italic outline-none [font-family:'Liberation_Mono',monospace] placeholder:text-[#7b7b7b]"
      />
      <svg viewBox="0 0 6 4" className="h-[3px] w-[4px]">
        <path d="M0 4h6L3 0z" fill="#222" />
      </svg>
    </div>
  </div>
)

const Canvas = () => (
  <main className="relative min-h-[369px] flex-1 overflow-hidden bg-[#212830]">
    <Drawing />
    <PartsTable />
    <SpecTable />
    <p className="absolute top-[4px] left-[2px] text-[#cfd2d5]">[−][Top][2D Wireframe]</p>
    <div className="absolute top-[5px] right-[6px] flex gap-[4px] text-[#e6e6e6]">
      <button type="button" aria-label="Minimize drawing">
        <svg viewBox="0 0 8 8" className="h-2 w-2">
          <path d="M1 5h6v2H1z" fill="currentColor" />
        </svg>
      </button>
      <button type="button" aria-label="Restore drawing">
        <svg viewBox="0 0 8 8" className="h-2 w-2" fill="none" stroke="currentColor">
          <path d="M3 2.500V1h4v4H5.500M1.500 3.500h4v3h-4z" />
        </svg>
      </button>
      <button type="button" aria-label="Close drawing">
        <X size={8} strokeWidth={5} />
      </button>
    </div>
    <ViewCube />
    <CommandLine />
  </main>
)

const LayoutTabs = () => (
  <div className="flex h-[11px] items-stretch gap-[3px] pl-2 text-[#b5b5b5]">
    <button type="button" className="w-[33px] rounded-b-[6px] bg-[#707070] font-bold text-white">Model</button>
    <button type="button" className="w-9 rounded-b-[6px] bg-[#4f4f4f]">Layout1</button>
    <button type="button" className="w-9 rounded-b-[6px] bg-[#4f4f4f]">Layout2</button>
    <button type="button" aria-label="New layout" className="flex w-[13px] items-center justify-center rounded-b-[5px] bg-[#4f4f4f]">
      <Plus size={8} strokeWidth={3} />
    </button>
  </div>
)

const StatusIcon = ({ children }) => (
  <svg viewBox="0 0 12 12" className="h-[10px] w-[10px] shrink-0" fill="none" stroke="#bdbdbd" strokeWidth="1.200">
    {children}
  </svg>
)

const statusGroups = [
  {
    width: "w-[63px]",
    content: (
      <>
        <StatusIcon><path d="M2 1v9h9M5 10V7H2" /></StatusIcon>
        <StatusIcon><path d="M10 3a5 5 0 1 0 1 3H6l5-5" /></StatusIcon>
        <Caret />
        <StatusIcon><path d="M1 1l10 10M5 5V0M8 11V8" /></StatusIcon>
        <Caret />
      </>
    ),
  },
  {
    width: "w-[38px]",
    content: (
      <>
        <StatusIcon><path d="M10 1L2 10h9" stroke="#3d7fd6" strokeWidth="1.600" /></StatusIcon>
        <StatusIcon>
          <path d="M3 3h7v7H3z" stroke="#3d7fd6" strokeWidth="1.500" />
          <path d="M1 1h4v3H1z" fill="#2fae50" stroke="none" />
        </StatusIcon>
        <Caret />
      </>
    ),
  },
  {
    width: "w-[26px]",
    content: (
      <>
        <StatusIcon>
          <circle cx="6" cy="6" r="3" stroke="#d8d8d8" strokeWidth="2.500" />
          <circle cx="6" cy="6" r="4.800" stroke="#d8d8d8" strokeWidth="1.500" strokeDasharray="2 1.770" />
        </StatusIcon>
        <Caret />
      </>
    ),
  },
  { width: "w-[15px]", content: <Plus size={12} strokeWidth={2.5} /> },
  { width: "w-[15px]", content: <StatusIcon><path d="M1 2h5v4H1z" /><circle cx="8" cy="4" r="2.500" /><path d="M4 11l3-4 3 4z" /></StatusIcon> },
  {
    width: "w-[43px]",
    content: (
      <>
        <StatusIcon><path d="M2 1h4v5h5v5H2z" fill="#ddd" /></StatusIcon>
        <StatusIcon><path d="M1 2l3 1M3 1v4M5 5h3v5H5zM8 7h3v4" stroke="#e2e2e2" /></StatusIcon>
        <StatusIcon><path d="M2 5h3V2h3v5h3v4H5V7H2z" fill="#2a5fb0" stroke="#4b8ee8" /></StatusIcon>
      </>
    ),
  },
  {
    width: "w-[16px]",
    content: <StatusIcon><circle cx="6" cy="6" r="5" fill="#1c4a8c" stroke="#2e74d2" strokeWidth="1.600" /></StatusIcon>,
  },
  {
    width: "w-[15px]",
    content: (
      <StatusIcon>
        <path d="M1 1h6v4H1z" fill="#e8e06a" stroke="none" />
        <path d="M3 5h7v4H3z" fill="#9dd0f2" stroke="none" />
        <path d="M6 8h5v3H6z" fill="#69b85a" stroke="none" />
      </StatusIcon>
    ),
  },
  { width: "w-[16px]", content: <StatusIcon><path d="M1 2.500h10M1 6h10M1 9.500h10" strokeWidth="1.400" /></StatusIcon> },
]

const StatusBar = () => (
  <footer className="flex h-[17px] justify-end text-[#d5d5d5]">
    <div className="flex border border-[#707070]">
      <button type="button" className="w-[29px] bg-[#505050] text-white">MODEL</button>
      {statusGroups.map((group, i) => (
        <div key={i} className={clsx("flex items-center justify-around border-l border-[#707070] bg-[#484848]", group.width)}>
          {group.content}
        </div>
      ))}
    </div>
  </footer>
)

const Taskbar = () => (
  <div className="flex h-6 items-center bg-linear-to-r from-[#1f3d45] via-[#213641] to-[#192440] text-[7px] text-white">
    <button type="button" aria-label="Start" className="flex w-[28px] justify-center">
      <svg viewBox="0 0 10 10" className="h-[10px] w-[10px]" fill="#fff">
        <path d="M0 1.400l4.500-.7v4H0zM5 .7L10 0v4.700H5zM0 5.200h4.500v4L0 8.600zM5 5.200h5V10l-5-.8z" />
      </svg>
    </button>
    <button type="button" aria-label="Search" className="flex w-[29px] justify-center">
      <Search size={14} strokeWidth={2.2} className="-scale-x-100" />
    </button>
    <button type="button" aria-label="Task view" className="flex w-[29px] justify-center">
      <svg viewBox="0 0 12 12" className="h-[11px] w-[11px]" fill="none" stroke="#dfe5e8">
        <path d="M1 1v2h6V1M1 11V9h6v2M1 5h6v2.500H1zM10 1v2M10 5v6M9 4h2" />
      </svg>
    </button>
    <button type="button" aria-label="Edge" className="flex w-[30px] justify-center">
      <svg viewBox="0 0 16 16" className="h-4 w-4">
        <circle cx="8" cy="8" r="7.500" fill="#1577c8" />
        <path d="M.6 7C1.500 2.500 5 .5 8.500.5c4 0 7 2.500 7 6 0 3-3 4-5.500 3C10 5.500 4 4 .6 7z" fill="#48cf8e" />
        <path d="M.6 7C3 4 8 4 9.500 7.500c-4-.5-5 4 0 7.700C4 16.500 0 12 .6 7z" fill="#2ea5e4" />
        <path d="M8 8c-2 3 1 6 6 4-1 2-3 3-5 3.200C5 13 5 9 8 8z" fill="#0d4c9a" />
      </svg>
    </button>
    <button type="button" aria-label="File Explorer" className="flex w-[29px] justify-center">
      <svg viewBox="0 0 14 12" className="h-3 w-[14px]">
        <path d="M0 1h5l1.500 1.500H14V12H0z" fill="#e9b64a" />
        <path d="M0 4h14v8H0z" fill="#fbdc84" />
        <path d="M3 8h8v4H9v-2H5v2H3z" fill="#3f9be0" />
      </svg>
    </button>
    <button type="button" aria-label="Store" className="flex w-[29px] justify-center">
      <svg viewBox="0 0 14 14" className="h-[14px] w-[14px]">
        <path d="M4 4V1h6v3" fill="none" stroke="#40b0e8" strokeWidth="1.300" />
        <rect y="3" width="14" height="11" rx="1.500" fill="#f5f5f5" />
        <path d="M4 5.500h2.700v2.700H4z" fill="#e8502c" />
        <path d="M7.300 5.500H10v2.700H7.300z" fill="#7eb82c" />
        <path d="M4 8.800h2.700v2.700H4z" fill="#2c9de8" />
        <path d="M7.300 8.800H10v2.700H7.300z" fill="#f2b82c" />
      </svg>
    </button>
    <button type="button" aria-label="Outlook" className="flex w-[29px] justify-center">
      <svg viewBox="0 0 15 14" className="h-[14px] w-[15px]">
        <path d="M4 5l5-4 6 4v8H4z" fill="#1b6fc2" />
        <path d="M5 3h9v6H5z" fill="#54c0f0" />
        <path d="M4 7l5.500 3.500L15 7v6.500H4z" fill="#2b93e0" />
        <rect y="3" width="8" height="8" rx="1" fill="#0f5cae" />
        <circle cx="4" cy="7" r="2" fill="none" stroke="#fff" strokeWidth="1.200" />
      </svg>
    </button>
    <button type="button" aria-label="AutoCAD" className="ml-px flex h-6 w-7 items-center justify-center border-b border-[#7db9e8] bg-[#4d626c]">
      <span className="flex h-[15px] w-[15px] items-center justify-center bg-[#f3ece9]">
        <AcadLogo className="h-[12px] w-[12px]" />
      </span>
    </button>
    <div className="ml-auto flex items-center gap-[5px]">
      <svg viewBox="0 0 8 5" className="h-[5px] w-[8px]" fill="none">
        <path d="M1 4l3-3 3 3" stroke="#fff" />
      </svg>
      <span className="flex h-[9px] w-[9px] items-center justify-center bg-[#f2e0de] font-bold text-[#c8383a]">V</span>
      <BatteryMedium size={10} strokeWidth={2.5} fill="currentColor" />
      <Globe size={10} strokeWidth={2} />
      <Volume2 size={10} strokeWidth={2} />
      <time className="flex w-[35px] flex-col items-end leading-[11px] whitespace-nowrap">
        <span className="pr-[3px]">12:16 PM</span>
        <span>11/22/2024</span>
      </time>
      <MessageSquare size={12} strokeWidth={2} className="ml-[2px]" />
      <span className="ml-[5px] h-6 w-[2px] border-l border-[#56657a]" />
    </div>
  </div>
)

const SiteBadge = () => (
  <svg viewBox="0 0 110 32" className="absolute top-[10px] right-[30px] h-8 w-[110px] [font-family:'Liberation_Sans_Narrow','Liberation_Sans',sans-serif]" fontWeight="700">
    <path d="M1 5q0-3 3-3h8l2-2h14q4 0 4 4v5h16V4h9v6h19V4h10v7h15q8 0 8 7v2q0 6-6 6H33v3H3q-3 0-3-3z" fill="#fff" />
    <path d="M3 7q0-2 2-2h7l2-2h14q2 0 2 2v20q0 1-1 1H4q-2 0-2-2z" fill="#1aa7e6" />
    <path d="M3 8h27" stroke="#8fdcfc" />
    <text x="3" y="23" fontSize="15" fill="#fff">File</text>
    <g fill="#1593d6" stroke="#fff" strokeWidth="3" strokeLinejoin="round" paintOrder="stroke">
      <text x="34" y="24" fontSize="14">Thiết</text>
      <text x="72" y="24" fontSize="14">Kế</text>
      <text x="90" y="24" fontSize="10">.vn</text>
    </g>
  </svg>
)

export default function App() {
  return (
    <div className="relative flex min-h-screen flex-col bg-linear-to-r from-[#00aef8] via-[#1285da] to-[#0a3cb8] text-[7px] leading-[9px] [font-family:'Open_Sans',sans-serif]">
      <div className="relative mt-px mr-[6px] mb-[4px] ml-[4px] flex flex-1 flex-col border-x border-b border-[#8fc4ec] bg-[#383838]">
        <TitleBar />
        <MenuTabs />
        <button type="button" aria-label="Application menu" className="absolute top-[5px] left-0 flex h-[24px] w-[24px] items-start justify-center border border-[#9a9a9a] bg-linear-to-b from-[#b5b5b5] to-[#5f5f5f] pt-px">
          <AcadLogo className="h-[16px] w-[16px]" />
          <Caret className="mt-[9px]" />
        </button>
        <Ribbon />
        <FileTabs />
        <Canvas />
        <LayoutTabs />
        <StatusBar />
      </div>
      <Taskbar />
      <SiteBadge />
      <p className="absolute bottom-[15px] left-1/2 -translate-x-1/2 text-[21px] leading-[22px] font-bold whitespace-nowrap text-[#b9b9b9] [font-family:'Liberation_Sans',sans-serif] [text-shadow:1px_1px_1px_#000]">
        Copyright © FileThietKe.vn
      </p>
    </div>
  )
}
